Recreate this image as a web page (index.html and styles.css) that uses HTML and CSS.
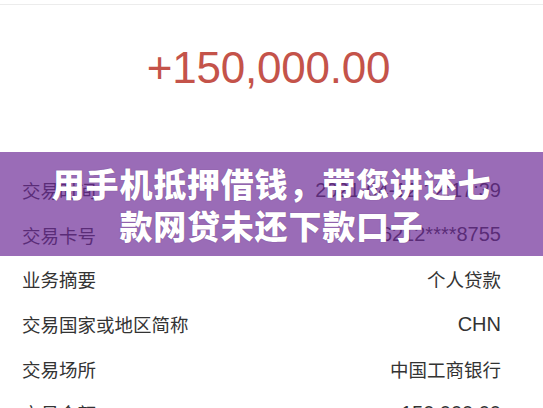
FILE: index.html
```html
<!doctype html>
<html>
<head>
 <meta charset="utf-8">
 <title>交易详情</title>
 <meta name=viewport content="width=device-width, initial-scale=1">
 <link rel="stylesheet" href="styles.css">
</head>
<body>
<div class=page>
 <div class=topline></div>
 <div class=amount>+150,000.00</div>
 <div class=rows>
  <div class=row><span>交易时间</span><span class=num>2021-04-12 12:17:39</span></div>
  <div class=row><span>交易卡号</span><span class=num>6212****8755</span></div>
  <div class=row><span>业务摘要</span><span>个人贷款</span></div>
  <div class=row><span>交易国家或地区简称</span><span class=num>CHN</span></div>
  <div class=row><span>交易场所</span><span>中国工商银行</span></div>
  <div class=row><span>交易金额</span><span class=num>150,000.00</span></div>
 </div>
 <div class=banner>
  <h1>用手机抵押借钱，带您讲述七<br>款网贷未还下款口子</h1>
 </div>
</div>
</body>
</html>
```
FILE: styles.css
```css
html, body {margin:0; padding:0; background:#fff;}
body {font-family: "Noto Sans CJK SC", "Noto Sans", sans-serif; color:#333;}
.page {position:relative; width:543px; height:408px; overflow:hidden;}
.topline {height:4px; border-bottom:1px solid #ececec;}
.amount {
  height:163px;
  padding:38px 6px 0 0;
  box-sizing:border-box;
  text-align:center;
  font-family: "Liberation Sans", Arial, sans-serif;
  font-size:44px;
  color:#c4534a;
  letter-spacing:-0.2px;
}
.rows {padding:0 42px 0 22px;}
.row {
  height:44.6px;
  display:flex;
  align-items:center;
  justify-content:space-between;
  font-size:18.5px;
}
.num {font-family: "Liberation Sans", Arial, sans-serif; font-size:20px;}
.banner {
  position:absolute;
  left:0; right:0;
  top:152px;
  height:104px;
  background:rgba(108,42,150,0.69);
  display:flex;
  align-items:center;
  justify-content:center;
}
.banner h1 {
  margin:0;
  color:#fff;
  font-size:33px;
  font-weight:900;
  line-height:42px;
  text-align:center;
  letter-spacing:0.8px;
  text-shadow:0 0 1px rgba(60,20,80,0.5);
}
```
